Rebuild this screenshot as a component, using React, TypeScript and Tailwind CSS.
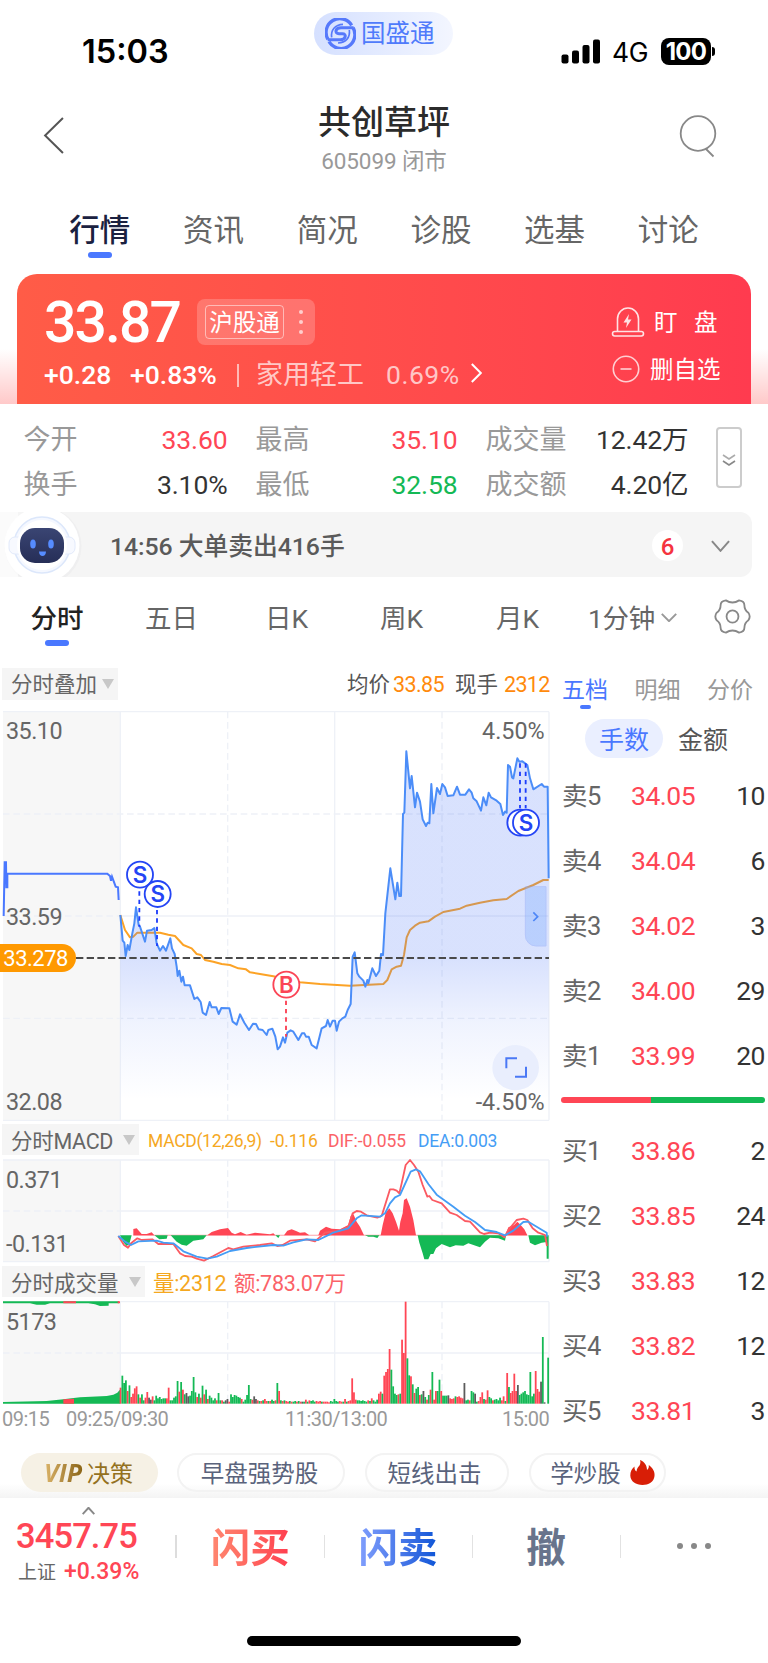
import React from "react";

const VOLUME =
  "r48 g84 g62 g70 r38 g55 r20 r30 r46 r52 g28 r18 g28 g10 r18 r35 k18 k12 r22 g10 g24 g16 g20 g14 g16 g16 r16 r48 g10 g10 g18 g22 g68 r36 g65 r42 g28 k32 k22 g24 g38 g80 g34 r20 g30 r18 g54 r28 g42 r14 g24 g18 g10 g16 r10 g32 g10 r10 g6 k10 k14 r6 g28 g20 g26 g24 g20 g18 r14 g6 g12 g26 g56 g14 r12 k22 k14 r10 g8 r8 g10 r14 r8 g8 r8 g12 g8 r10 g62 r38 g10 r8 g10 r8 r6 g8 r6 g6 g8 r6 g8 r6 k6 g6 r12 g6 r10 g8 g10 g6 r8 r6 r8 g6 r6 r6 r6 r4 g8 g6 g14 g8 g6 r8 r6 g6 r14 g6 r8 r10 r76 r34 r12 g10 g10 g8 g10 g8 g6 r10 g8 r16 g10 g6 g12 r30 r36 g30 r84 r95 r104 r164 g102 g52 g30 g26 r28 g30 r192 r152 r306 g136 g85 r82 g58 r32 g45 g50 r26 g28 k38 g20 r12 g26 r42 g95 r12 r38 g38 g72 r38 g24 g24 g24 k25 r16 r14 r16 g22 r20 r22 r18 r16 k62 g10 g12 r10 g38 g34 k30 g6 r8 r20 r34 g14 r12 r40 g20 g16 r10 g12 g14 g10 g18 r10 r22 g8 r92 g50 r32 r38 r90 r38 k56 g26 g30 g34 g38 g28 g26 g95 g22 g30 r98 r44 r36 k66 g200 k4 k0 g138";

const BAR_COLORS: Record<string, string> = { r: "#ff4655", g: "#14b955", k: "#5c5c5c" };

const bars = VOLUME.split(" ").map((b, i) => ({
  x: 359 + i * 5.345,
  h: Number(b.slice(1)),
  fill: BAR_COLORS[b[0]],
}));

const PRICE =
  "361,645 368,722 373,728 377,768 383,735 388,750 397,700 403,670 408,622 416,675 420,680 435,725 441,692 455,690 463,684 470,730 480,752 489,738 498,752 511,715 516,745 524,762 530,800 533,828 538,812 544,845 549,830 554,856 570,856 583,897 592,892 602,906 608,938 618,945 629,906 635,922 649,922 656,942 664,924 688,925 698,965 710,974 720,943 733,968 747,990 759,971 768,972 776,988 788,990 800,1005 805,990 817,986 826,1010 833,1048 840,1040 849,1012 855,1028 862,998 872,991 880,995 895,1020 906,1000 913,1000 918,1010 926,1010 935,1035 950,1045 965,985 978,978 983,960 990,980 998,962 1005,962 1010,992 1017,965 1027,955 1036,950 1043,930 1052,912 1058,770 1064,757 1072,820 1078,830 1090,842 1096,860 1102,840 1105,850 1117,805 1128,828 1138,812 1143,762 1149,765 1156,640 1171,505 1186,598 1192,548 1198,588 1203,588 1209,342 1213,338 1219,154 1230,265 1235,228 1245,322 1251,278 1260,305 1268,358 1278,378 1283,368 1288,370 1294,252 1300,340 1311,264 1320,282 1327,252 1335,262 1343,288 1360,286 1371,260 1380,284 1396,284 1407,268 1415,278 1420,295 1430,304 1443,332 1450,292 1459,316 1466,278 1473,292 1490,302 1501,312 1509,345 1515,335 1520,338 1524,195 1530,200 1536,232 1540,235 1552,175 1558,185 1567,184 1582,195 1590,235 1600,268 1625,252 1632,260 1643,260 1646,535";

const AVERAGE =
  "361,645 375,690 390,712 400,710 412,698 480,698 505,704 525,708 550,735 575,745 590,762 603,765 615,780 640,785 665,792 690,795 715,805 738,808 750,817 780,822 820,829 860,838 900,847 960,852 1050,857 1150,852 1162,840 1175,808 1190,800 1203,797 1212,765 1220,712 1230,690 1245,677 1260,668 1285,664 1305,650 1330,636 1380,626 1400,617 1440,608 1480,601 1520,597 1555,573 1600,555 1630,540 1646,540";

function Chevron({ className, d }: { className: string; d: string }) {
  return (
    <svg className={className} viewBox="0 0 20 20" preserveAspectRatio="none" fill="none" stroke="currentColor" strokeWidth="2">
      <path d={d} vectorEffect="non-scaling-stroke" />
    </svg>
  );
}

function StatusBar() {
  return (
    <div className="flex h-[88px] shrink-0 items-start">
      <div className="w-[314px] pt-[32px] pl-[82px] font-['Inter'] text-[32.500px] leading-[40px] font-semibold tracking-[0px] text-black">
        15:03
      </div>
      <div className="mt-[12px] flex h-[43px] w-[139px] items-center rounded-full bg-linear-to-r from-[#d5e0ff] to-[#f3f6ff] pl-[11px]">
        <svg className="h-[31px] w-[31px]" viewBox="0 0 93 93" fill="none" stroke="#5679fb">
          <path d="M80 22A41 41 0 0 0 9 64" strokeWidth="10" />
          <path d="M12 71A41 41 0 0 0 84 29" strokeWidth="10" />
          <path d="M86 29H48C30 29 28 47 42 47H52C66 47 63 65 46 65H8" strokeWidth="9" />
          <path d="M20 58C17 36 30 20 54 19" strokeWidth="5" />
          <path d="M73 36C76 58 63 74 39 75" strokeWidth="5" />
        </svg>
        <span className="mt-[2px] ml-[5px] text-[24.500px] leading-none font-normal text-[#4f7bfb]">国盛通</span>
      </div>
      <div className="mt-[38px] ml-[108px] flex h-[26px] items-center">
        <svg className="h-[25px] w-[39px]" viewBox="0 0 39 25">
          <rect x="0.500" y="15.500" width="7" height="9" rx="2" />
          <rect x="11" y="11.500" width="7" height="13" rx="2" />
          <rect x="21.500" y="6" width="7" height="18.500" rx="2" />
          <rect x="32" y="0.500" width="7" height="24" rx="2" />
        </svg>
        <span className="mt-[2px] ml-[12px] w-[49px] font-['Inter'] text-[26.500px] leading-none tracking-[-0.300px] text-black">4G</span>
        <div className="flex h-[27px] w-[50px] items-center justify-center rounded-[8px] bg-black pt-px font-['Inter'] text-[24px] leading-none font-bold tracking-[-0.700px] text-white">
          100
        </div>
        <div className="ml-[1px] h-[9px] w-[3px] rounded-r-full bg-black" />
      </div>
    </div>
  );
}

function Header() {
  return (
    <div className="flex h-[108px] shrink-0">
      <div className="w-[284px]">
        <Chevron className="mt-[28px] ml-[43px] h-[39px] w-[21px] text-[#555]" d="M19 1L2 10L19 19" />
      </div>
      <div className="flex w-[200px] flex-col items-center pt-[14px]">
        <h1 className="text-[33px] leading-[42px] font-medium text-[#2b2b2b]">共创草坪</h1>
        <p className="mt-[3px] text-[22.500px] leading-[28px] tracking-[-0.100px] text-[#999]">605099 闭市</p>
      </div>
      <svg className="mt-[25px] ml-[194px] h-[46px] w-[42px]" viewBox="0 0 42 46" fill="none" stroke="#888" strokeWidth="1.800">
        <circle cx="20" cy="20.500" r="17.300" />
        <path d="M28 36L35.500 43.500" />
      </svg>
    </div>
  );
}

function MainTabs() {
  return (
    <nav className="flex h-[66px] shrink-0 pl-[43px] text-[30.500px]">
      {["行情", "资讯", "简况", "诊股", "选基", "讨论"].map((t, i) => (
        <div key={t} className={`flex w-[113.700px] flex-col items-center pt-[15px] leading-[40px] ${i === 0 ? "font-medium text-[#1a2140]" : "text-[#666]"}`}>
          {t}
          {i === 0 && <span className="mt-px h-[6px] w-[24px] rounded-[3px] bg-[#4a78ff]" />}
        </div>
      ))}
    </nav>
  );
}

function QuoteCard() {
  return (
    <div className="mt-[12px] h-[130px] shrink-0 bg-[linear-gradient(to_top,#ffc9c9,#ffffff_55px)] px-[17px]">
      <div className="flex h-full justify-between rounded-t-[20px] bg-linear-to-r from-[#ff5c47] to-[#ff3b4f] text-white">
        <div className="pl-[27px]">
          <div className="flex h-[72px] items-center pt-[24px]">
            <span className="w-[153px] text-[57px] leading-none font-medium tracking-[-1.900px]">33.87</span>
            <div className="flex h-[46px] w-[118px] items-center rounded-[8px] bg-white/20 pl-[8px]">
              <span className="flex h-[34px] w-[79px] items-center justify-center rounded-[4px] border border-white/50 pt-[4px] text-[23.500px] leading-none">沪股通</span>
              <span className="ml-[15px] flex flex-col gap-[6px]">
                <i className="block h-1 w-1 rounded-full bg-white/65" />
                <i className="block h-1 w-1 rounded-full bg-white/65" />
                <i className="block h-1 w-1 rounded-full bg-white/65" />
              </span>
            </div>
          </div>
          <div className="mt-[14px] flex h-[30px] items-center text-[26.500px] leading-none tracking-[0px]">
            <span className="w-[86px] font-medium">+0.28</span>
            <span className="w-[107px] font-medium">+0.83%</span>
            <span className="h-[23px] w-[2px] bg-white/60" />
            <span className="ml-[17px] w-[130px] text-[27px] text-white/70">家用轻工</span>
            <span className="w-[84px] tracking-[0.500px] text-white/70">0.69%</span>
            <Chevron className="mb-1 h-[20px] w-[12px]" d="M3 1L18 10L3 19" />
          </div>
        </div>
        <div className="flex w-[141px] flex-col pt-[31px] text-[23.500px] leading-none">
          <div className="flex h-[34px] items-center">
            <svg className="h-[32px] w-[36px]" viewBox="0 0 36 32" fill="none" stroke="currentColor" strokeWidth="1.600" opacity=".85">
              <path d="M7.500 25V13A10.500 11 0 0 1 28.500 13V25" />
              <rect x="2.500" y="25.500" width="31" height="4.500" rx="2.200" />
              <path d="M19 8L13.500 16.500H17L16 22L21.500 13.500H18Z" fill="currentColor" stroke="none" />
            </svg>
            <span className="mt-[3px] ml-[8px] w-[40px]">盯</span>
            <span className="mt-[3px]">盘</span>
          </div>
          <div className="mt-[13px] flex h-[34px] items-center">
            <svg className="ml-[1px] h-[30px] w-[30px] opacity-75" viewBox="0 0 30 30" fill="none" stroke="currentColor" strokeWidth="1.600">
              <circle cx="15" cy="15" r="12.700" />
              <path d="M9.500 15H20.500" />
            </svg>
            <span className="mt-[3px] ml-[9px]">删自选</span>
          </div>
        </div>
      </div>
    </div>
  );
}

function StatRow({ items }: { items: [string, string, string][] }) {
  const value = ["w-[103px]", "w-[101px]", "w-[102px]"];
  const gap = ["mr-[28px]", "mr-[28px]", ""];
  return (
    <div className="flex h-[45px] items-center">
      {items.map(([l, v, c], i) => (
        <React.Fragment key={l}>
          <span className="w-[101px] text-[27px] text-[#999]">{l}</span>
          <span className={`${value[i]} ${gap[i]} text-right text-[26.500px] tracking-[-0.100px] whitespace-nowrap ${c}`}>{v}</span>
        </React.Fragment>
      ))}
    </div>
  );
}

function Stats() {
  return (
    <div className="flex h-[108px] shrink-0 pl-[23.500px]">
      <div className="w-[692px] pt-[14px] leading-none">
        <StatRow items={[["今开", "33.60", "text-[#ff4655]"], ["最高", "35.10", "text-[#ff4655]"], ["成交量", "12.42万", "text-[#333]"]]} />
        <StatRow items={[["换手", "3.10%", "text-[#333]"], ["最低", "32.58", "text-[#14b955]"], ["成交额", "4.20亿", "text-[#333]"]]} />
      </div>
      <div className="mt-[23px] flex h-[61px] w-[26px] items-center justify-center rounded-[4px] border-2 border-[#ccc]">
        <svg className="mt-[4px] h-[14px] w-[14px]" viewBox="0 0 14 14" fill="none" stroke="#888" strokeWidth="1.600">
          <path d="M1 2L7 6L13 2" opacity=".7" />
          <path d="M1 8L7 12L13 8" />
        </svg>
      </div>
    </div>
  );
}

function AlertBar() {
  return (
    <div className="mr-[16px] flex h-[65px] shrink-0 items-center rounded-r-[12px] bg-[#f5f5f5]">
      <svg className="h-[65px] w-[82px]" viewBox="0 0 82 65">
        <defs>
          <linearGradient id="face" x1="0" y1="0" x2="0" y2="1">
            <stop offset="0" stopColor="#3a4573" />
            <stop offset="1" stopColor="#262e57" />
          </linearGradient>
        </defs>
        <circle cx="43" cy="34" r="38.500" fill="#efeff0" />
        <path d="M0 0H18V65H0Z" fill="#fff" opacity=".6" />
        <circle cx="42" cy="33" r="37.500" fill="#fff" />
        <circle cx="42" cy="33" r="28" fill="#f5f8ff" stroke="#dce7fb" strokeWidth="1.500" />
        <rect x="9" y="25" width="66" height="17" rx="6" fill="#f7f9ff" stroke="#e2eafb" />
        <circle cx="42" cy="33" r="25" fill="#fff" />
        <rect x="20" y="16" width="44" height="35" rx="15" fill="url(#face)" />
        <ellipse cx="33" cy="32" rx="2.800" ry="4.500" fill="#568cff" />
        <ellipse cx="51" cy="32" rx="2.800" ry="4.500" fill="#568cff" />
        <path d="M39 39.500H46C46 45.500 39 45.500 39 39.500Z" fill="#568cff" />
      </svg>
      <span className="mt-[5px] ml-[28px] grow text-[24.800px] leading-none font-medium tracking-[-0.050px] text-[#5a5a5a]">14:56 大单卖出416手</span>
      <span className="mt-[2px] flex h-[31px] w-[31px] items-center justify-center rounded-full bg-white pt-[2px] text-[24px] leading-none font-medium text-[#f5333f]">6</span>
      <Chevron className="mt-[3px] mr-[22px] ml-[28px] h-[12px] w-[19px] text-[#888]" d="M1 2L10 18L19 2" />
    </div>
  );
}

function PeriodTabs() {
  const widths = ["w-[114px]", "w-[115px]", "w-[115px]", "w-[115px]", "w-[117px]"];
  return (
    <div className="flex h-[83px] shrink-0 pt-[22px] text-[26.500px] leading-[40px] text-[#666]">
      {["分时", "五日", "日K", "周K", "月K"].map((t, i) => (
        <div key={t} className={`${widths[i]} flex flex-col items-center ${i === 0 ? "font-medium text-[#222]" : ""}`}>
          {t}
          {i === 0 && <span className="mt-[1px] h-[6px] w-[24px] rounded-[3px] bg-[#4a78ff]" />}
        </div>
      ))}
      <div className="ml-[12px] flex h-[40px] w-[126px] items-center tracking-[-0.300px]">
        1分钟
        <Chevron className="mb-[4px] ml-[6px] h-[9px] w-[16px] text-[#999]" d="M1 2L10 18L19 2" />
      </div>
      <svg className="h-[35px] w-[37px]" viewBox="-4 -2 112 102" preserveAspectRatio="none" fill="none" stroke="#888" strokeWidth="5.500" strokeLinejoin="round">
        <path d="M32 2Q52 14 72 2Q88 4 88 16Q88 30 100 38Q108 49 100 60Q88 68 88 82Q88 94 72 96Q52 84 32 96Q16 94 16 82Q16 68 4 60Q-4 49 4 38Q16 30 16 16Q16 4 32 2Z" />
        <circle cx="52" cy="49" r="18" />
      </svg>
    </div>
  );
}

function Triangle({ className }: { className: string }) {
  return (
    <svg className={`h-[10px] w-[12px] shrink-0 ${className}`} viewBox="0 0 12 10">
      <path d="M0 0H12L6 10Z" fill="#c8c8c8" />
    </svg>
  );
}

function Marker({ x, y, letter, color }: { x: number; y: number; letter: string; color: string }) {
  return (
    <g>
      <circle cx={x} cy={y} r="39" fill="#fff" stroke={color} strokeWidth="5.500" />
      <text x={x} y={y + 24} textAnchor="middle" fontSize="67" fontWeight="600" fill={color} className="font-['Inter']">
        {letter}
      </text>
    </g>
  );
}

function PriceChart() {
  const grid = "#eef1f7";
  return (
    <svg className="block h-[412px] w-[560px] shrink-0 font-['Roboto']" viewBox="0 30 1680 1236">
      <defs>
        <linearGradient id="priceFill" gradientUnits="userSpaceOnUse" x1="0" y1="780" x2="0" y2="1200">
          <stop offset="0" stopColor="#3f6cf8" stopOpacity=".2" />
          <stop offset=".45" stopColor="#3f6cf8" stopOpacity=".08" />
          <stop offset="1" stopColor="#3f6cf8" stopOpacity="0" />
        </linearGradient>
      </defs>
      <rect x="9" y="35" width="352" height="1226" fill="#f7f7f7" />
      <g stroke={grid} strokeWidth="4" fill="none">
        <path d="M9 35H1647M9 1261H1647M361 35V1261M1004 35V1261M1647 35V1261M361 648H1647" />
        <path d="M9 342H1647M9 648H361M9 955H1647M683 35V1261M1326 35V1261" strokeDasharray="20 11" />
      </g>
      <polyline points={AVERAGE} fill="none" stroke="#fca326" strokeWidth="6" strokeLinejoin="round" />
      <polygon points={`${PRICE} 1646,1261 361,1261`} fill="url(#priceFill)" />
      <polyline points={PRICE} fill="none" stroke="#4b8df8" strokeWidth="6" strokeLinejoin="round" />
      <polyline points="11,648 14,487 18,487 19,562 22,562 22,521 322,521 330,528 333,542 336,530 347,560 354,562 356,600" fill="none" stroke="#4a78ff" strokeWidth="6" />
      <path d="M228 774H1647" stroke="#4a4a4a" strokeWidth="6" strokeDasharray="22 10" />
      <path d="M0 732H186A42 42 0 0 1 186 816H0Z" fill="#ff9900" />
      <g stroke="#1d3dfb" strokeWidth="5.500" strokeDasharray="13 12">
        <path d="M418 574V680M471 630V738M1560 190V325M1577 190V325" />
        <path d="M858 902V1010" stroke="#fb3f52" />
      </g>
      <Marker x={420} y={524} letter="S" color="#2445f5" />
      <Marker x={473} y={582} letter="S" color="#2445f5" />
      <Marker x={859} y={854} letter="B" color="#fb4556" />
      <Marker x={1561} y={368} letter="" color="#2445f5" />
      <Marker x={1578} y={368} letter="S" color="#2445f5" />
      <path d="M1638 560H1576V705A32 32 0 0 0 1608 738H1638Z" fill="#8db6ff" opacity=".4" stroke="#7f9df5" strokeWidth="3" />
      <path d="M1600 637L1613 650L1600 663" fill="none" stroke="#4d86f7" strokeWidth="5" />
      <ellipse cx="1547" cy="1103" rx="70" ry="68" fill="#e9eefd" />
      <path d="M1519 1105V1075H1551M1545 1130H1578V1100" fill="none" stroke="#4a78f5" strokeWidth="6" />
      <g fontSize="70" letterSpacing="-1.500" fill="#666">
        <text x="18" y="118">35.10</text>
        <text x="18" y="674">33.59</text>
        <text x="18" y="1231">32.08</text>
        <text x="1634" y="118" textAnchor="end" letterSpacing="0">4.50%</text>
        <text x="1634" y="1231" textAnchor="end" letterSpacing="0">-4.50%</text>
        <text x="10" y="799" fill="#fff" fontSize="66">33.278</text>
      </g>
    </svg>
  );
}

function MacdChart() {
  return (
    <svg className="block h-[105px] w-[560px] shrink-0 font-['Roboto']" viewBox="0 144 1680 315">
      <rect x="9" y="150" width="352" height="305" fill="#f7f7f7" />
      <g stroke="#eef1f7" strokeWidth="4">
        <path d="M9 150H1647M9 455H1647M361 150V455M1004 150V455M1647 150V455M361 303H1647" />
        <path d="M9 303H361M683 150V455M1326 150V455" strokeDasharray="20 11" />
      </g>
      <g fill="#ff4655">
        <path d="M400 376V357L410 355L425 372L440 372L455 367L463 376ZM622 376L635 366L660 358L684 354L695 368L705 373L722 366L740 374L765 368L810 373L820 370L826 376ZM852 376L862 362L875 358L890 364L900 368L915 367L928 376Z" />
        <path d="M955 376L960 362L978 350L995 356L1020 358L1045 345L1052 318L1060 312L1070 335L1080 350L1092 376ZM1142 376L1148 345L1157 308L1168 295L1178 310L1188 335L1197 362L1201 335L1208 310L1212 270L1220 265L1230 290L1240 330L1248 376ZM1516 376L1525 352L1542 345L1552 335L1562 345L1573 358L1582 376Z" />
        <path d="M400 374.500H1582V377.500H400Z" opacity=".5" />
      </g>
      <g fill="#14b955">
        <path d="M360 376L370 397L380 408L388 402L395 376ZM463 376L478 388L500 386L503 376ZM512 376L530 395L545 404L560 407L580 392L610 388L620 376ZM826 376L835 384L840 376ZM1095 376L1105 380L1120 380L1132 384L1138 376Z" />
        <path d="M1253 376L1258 398L1268 430L1273 448H1285L1292 432H1300L1308 415L1325 402L1350 412L1367 406L1390 407L1405 400L1440 412L1455 395L1470 383L1495 385L1515 392L1518 376ZM1585 376L1590 398L1605 406L1625 398L1640 396V446H1646V376Z" />
      </g>
      <g fill="none" strokeWidth="5.500" strokeLinejoin="round">
        <polyline stroke="#fb5a62" points="355,378 372,405 384,413 395,398 412,385 425,390 457,388 475,402 500,402 520,402 540,430 555,438 575,440 590,446 612,452 640,438 685,414 700,418 730,410 780,405 815,400 832,408 848,405 870,392 920,388 945,394 975,368 1020,362 1045,350 1058,310 1070,303 1083,305 1100,316 1132,323 1145,318 1160,270 1170,238 1180,238 1190,242 1198,250 1205,220 1217,165 1230,150 1242,165 1255,185 1268,225 1282,260 1288,258 1297,270 1325,280 1350,308 1370,315 1395,333 1410,335 1440,367 1452,372 1470,368 1495,370 1513,382 1525,360 1550,330 1570,326 1582,330 1598,355 1615,368 1635,375 1641,408" />
        <polyline stroke="#459df5" points="355,378 375,395 393,405 415,394 470,392 490,398 520,400 550,424 590,440 622,446 650,440 690,423 740,414 820,405 850,407 880,397 920,388 955,390 1000,368 1045,355 1070,325 1085,316 1140,320 1155,310 1170,280 1185,262 1200,255 1215,222 1232,185 1248,178 1260,184 1285,222 1310,254 1360,290 1395,317 1425,336 1455,360 1490,366 1515,376 1540,362 1570,336 1585,335 1610,350 1640,368 1641,380" />
      </g>
      <g fontSize="70" letterSpacing="-1.500" fill="#666">
        <text x="18" y="234">0.371</text>
        <text x="18" y="426">-0.131</text>
      </g>
    </svg>
  );
}

function VolumeChart() {
  return (
    <svg className="block h-[106px] w-[560px] shrink-0 font-['Roboto']" viewBox="0 567 1680 318">
      <rect x="9" y="575" width="352" height="306" fill="#f7f7f7" />
      <g stroke="#eef1f7" strokeWidth="4">
        <path d="M9 575H1647M361 575V881M1004 575V881M1647 575V881M361 729H1647" />
        <path d="M9 729H361M683 575V881M1326 575V881" strokeDasharray="20 11" />
      </g>
      <path d="M9 574H357V580H326V587L300 588L285 583L265 580H150L135 584L110 584L90 580H9Z" fill="#14b955" />
      <path d="M190 574H228V580H190ZM353 574H360V580H353Z" fill="#ff4655" />
      <path d="M9 881V876L140 873L190 868L240 862L320 858L340 854L352 848L361 838V881Z" fill="#14b955" />
      <path d="M190 881V868L222 866V881Z" fill="#ff4655" />
      {bars.map((b, i) => (
        <rect key={i} x={b.x} y={881 - b.h} width="5.345" height={b.h} fill={b.fill} />
      ))}
      <text x="18" y="659" fontSize="70" letterSpacing="-1.500" fill="#666">5173</text>
    </svg>
  );
}

function Charts() {
  return (
    <div className="flex w-[560px] shrink-0 flex-col leading-none whitespace-nowrap">
      <div className="mt-[8px] flex h-[32px] shrink-0 items-center pl-[2px] text-[21.500px]">
        <div className="flex h-[32px] w-[116px] items-center bg-[#f5f5f5] pl-[9px] text-[#666]">
          <span className="mt-[2px]">分时叠加</span>
          <Triangle className="ml-[5px]" />
        </div>
        <span className="mt-[2px] ml-[229px] w-[46px] text-[#555]">均价</span>
        <span className="mt-[2px] w-[62px] tracking-[-0.600px] text-[#ff8a0c]">33.85</span>
        <span className="mt-[2px] w-[49px] text-[#555]">现手</span>
        <span className="mt-[2px] tracking-[-0.700px] text-[#ff8a0c]">2312</span>
      </div>
      <div className="h-[10px] shrink-0" />
      <PriceChart />
      <div className="mt-[2px] mb-[3px] flex h-[31px] shrink-0 items-center pl-[2px]">
        <div className="flex h-[31px] w-[137px] items-center bg-[#f5f5f5] pl-[9px] text-[21.500px] tracking-[-0.300px] text-[#666]">
          <span className="mt-[4px] w-[101px]">分时MACD</span>
          <Triangle className="ml-[11px]" />
        </div>
        <div className="mt-[5px] ml-[9px] flex text-[17.500px]">
          <span className="w-[122px] tracking-[-0.300px] text-[#f5a81f]">MACD(12,26,9)</span>
          <span className="w-[58px] tracking-[-0.200px] text-[#f5a81f]">-0.116</span>
          <span className="w-[90px] tracking-[-0.100px] text-[#fb6268]">DIF:-0.055</span>
          <span className="tracking-[-0.200px] text-[#459df5]">DEA:0.003</span>
        </div>
      </div>
      <MacdChart />
      <div className="mt-[3px] mb-[2px] flex h-[31px] shrink-0 items-center pl-[2px] text-[21.500px]">
        <div className="flex h-[31px] w-[143px] items-center bg-[#f5f5f5] pl-[9px] text-[#666]">
          <span className="mt-[4px]">分时成交量</span>
          <Triangle className="ml-[10px]" />
        </div>
        <span className="mt-[4px] ml-[8px] w-[81px] tracking-[-0.300px] text-[#f5a81f]">量:2312</span>
        <span className="mt-[4px] tracking-[-0.300px] text-[#fb6268]">额:783.07万</span>
      </div>
      <VolumeChart />
      <div className="mt-[4px] flex h-[20px] items-center pl-[2px] text-[20px] tracking-[-0.500px] text-[#999]">
        <span className="w-[64px]">09:15</span>
        <span className="w-[219px]">09:25/09:30</span>
        <span className="w-[217px]">11:30/13:00</span>
        <span>15:00</span>
      </div>
    </div>
  );
}

function BookRows({ rows }: { rows: [string, string, string][] }) {
  return (
    <>
      {rows.map(([l, p, q]) => (
        <div key={l} className="flex h-[65px] items-center text-[26.500px] tracking-[-0.500px]">
          <span className="w-[69px] text-[25.500px] text-[#666]">{l}</span>
          <span className="w-[70px] text-[#ff4655]">{p}</span>
          <span className="grow text-right text-[#333]">{q}</span>
        </div>
      ))}
    </>
  );
}

function OrderBook() {
  return (
    <div className="flex grow flex-col pr-[3px] leading-none">
      <div className="mt-[13px] flex h-[32px] shrink-0 items-center pt-[2px] pl-[2px] text-[23px] text-[#999]">
        <span className="w-[72.500px] text-[#4a78ff]">五档</span>
        <span className="w-[72.500px]">明细</span>
        <span>分价</span>
      </div>
      <span className="ml-[20px] h-[4px] w-[11px] shrink-0 rounded-full bg-[#4a78ff]" />
      <div className="mt-[10px] ml-[25px] flex h-[39px] shrink-0 items-center text-[25px] text-[#555]">
        <span className="flex h-[39px] w-[78px] items-center justify-center rounded-full bg-[#eaefff] pt-[3px] text-[#4a78ff]">手数</span>
        <span className="mt-[3px] ml-[15px]">金额</span>
      </div>
      <div className="mt-[6px] shrink-0 pl-[2px]">
        <BookRows rows={[["卖5", "34.05", "10"], ["卖4", "34.04", "6"], ["卖3", "34.02", "3"], ["卖2", "34.00", "29"], ["卖1", "33.99", "20"]]} />
      </div>
      <div className="mt-[8px] ml-[1px] flex h-[6px] shrink-0 overflow-hidden rounded-full">
        <span className="w-[90px] bg-[#ff4655]" />
        <span className="grow bg-[#14b955]" />
      </div>
      <div className="mt-[16px] shrink-0 pl-[2px]">
        <BookRows rows={[["买1", "33.86", "2"], ["买2", "33.85", "24"], ["买3", "33.83", "12"], ["买4", "33.82", "12"], ["买5", "33.81", "3"]]} />
      </div>
    </div>
  );
}

function Chips() {
  const chip = "flex h-[39px] items-center justify-center rounded-full border-2 border-[#f3f3f3] text-[23.500px] leading-none text-[#5a637c]";
  return (
    <div className="flex h-[58px] shrink-0 bg-linear-to-b from-white from-75% to-[#f4f4f4] pt-[13px] pl-[21px]">
      <div className="mr-[19px] flex h-[39px] w-[137px] items-center justify-center rounded-full bg-[#f6f1e5] pr-[2px] text-[23px] leading-none text-[#94711f]">
        <span className="mr-[4px] bg-linear-to-r from-[#dcb56a] to-[#8a6413] bg-clip-text pr-px font-['Open_Sans'] text-[25px] font-bold italic text-transparent">VIP</span>
        <span className="mt-[4px]">决策</span>
      </div>
      <div className={`${chip} mr-[20px] w-[168px] pt-[4px] pr-[3px]`}>早盘强势股</div>
      <div className={`${chip} mr-[20px] w-[144px] pt-[4px] pr-[5px]`}>短线出击</div>
      <div className={`${chip} w-[137px] pl-[10px]`}>
        <span className="mt-[4px]">学炒股</span>
        <svg className="ml-[9px] h-[25px] w-[25px] shrink-0" viewBox="0 0 25 25">
          <path d="M10 0C15 2 17 6 17 10C18.500 9 19 7 18.800 5C23 8 25 12 24.500 16C24 22 18.500 25 12.500 25C6 25 0.500 21.500 0.300 15.500C0.200 11.500 2 8.500 4.500 6.500C4.300 9 5 10.500 6.500 11.500C6.800 8 8.500 7 9.500 5.500C10.500 3.800 10.700 1.800 10 0Z" fill="#d81e06" />
        </svg>
      </div>
    </div>
  );
}

function BottomBar() {
  return (
    <div className="flex h-[165px] shrink-0 flex-col items-center bg-white leading-none">
      <div className="flex h-[96px] w-full">
        <div className="w-[175px] pl-[16px]">
          <Chevron className="mt-[9px] ml-[66px] h-[8px] w-[13px] text-[#888]" d="M1 18L10 2L19 18" />
          <div className="mt-[4px] text-[34.500px] leading-[34px] font-medium tracking-[-0.900px] text-[#ff4655]">3457.75</div>
          <div className="mt-[7px] flex h-[22px] items-center pl-[2px] text-[19px] text-[#666]">
            <span className="mt-[2px]">上证</span>
            <span className="ml-[8px] text-[23px] font-medium tracking-[0px] text-[#ff4655]">+0.39%</span>
          </div>
        </div>
        <div className="flex h-[96px] grow items-center text-[39.500px] font-medium">
          <span className="h-[23px] w-[2px] bg-[#ddd]" />
          <span className="mt-[5px] w-[146.500px] bg-linear-to-r from-[#ff8a72] from-20% to-[#ff3f50] to-75% bg-clip-text text-center leading-[44px] font-bold text-transparent">闪买</span>
          <span className="h-[23px] w-px bg-[#e2e2e2]" />
          <span className="mt-[5px] w-[147px] bg-linear-to-r from-[#86a2ff] from-20% to-[#0f57d8] to-75% bg-clip-text text-center leading-[44px] font-bold text-transparent">闪卖</span>
          <span className="h-[23px] w-px bg-[#e2e2e2]" />
          <span className="mt-[5px] w-[147px] text-center leading-[44px] font-bold text-[#68748c]">撤</span>
          <span className="h-[23px] w-px bg-[#e2e2e2]" />
          <span className="flex grow justify-center gap-[8px]">
            <i className="block h-[6px] w-[6px] rounded-full bg-[#888]" />
            <i className="block h-[6px] w-[6px] rounded-full bg-[#888]" />
            <i className="block h-[6px] w-[6px] rounded-full bg-[#888]" />
          </span>
        </div>
      </div>
      <div className="mt-[42px] h-[10px] w-[274px] rounded-full bg-black" />
    </div>
  );
}

export default function App() {
  return (
    <div className="flex h-[1663px] w-[768px] flex-col overflow-hidden bg-white font-['Roboto','Noto_Sans_CJK_SC',sans-serif]">
      <StatusBar />
      <Header />
      <MainTabs />
      <QuoteCard />
      <Stats />
      <AlertBar />
      <PeriodTabs />
      <div className="flex h-[780px] shrink-0">
        <Charts />
        <OrderBook />
      </div>
      <Chips />
      <BottomBar />
    </div>
  );
}
